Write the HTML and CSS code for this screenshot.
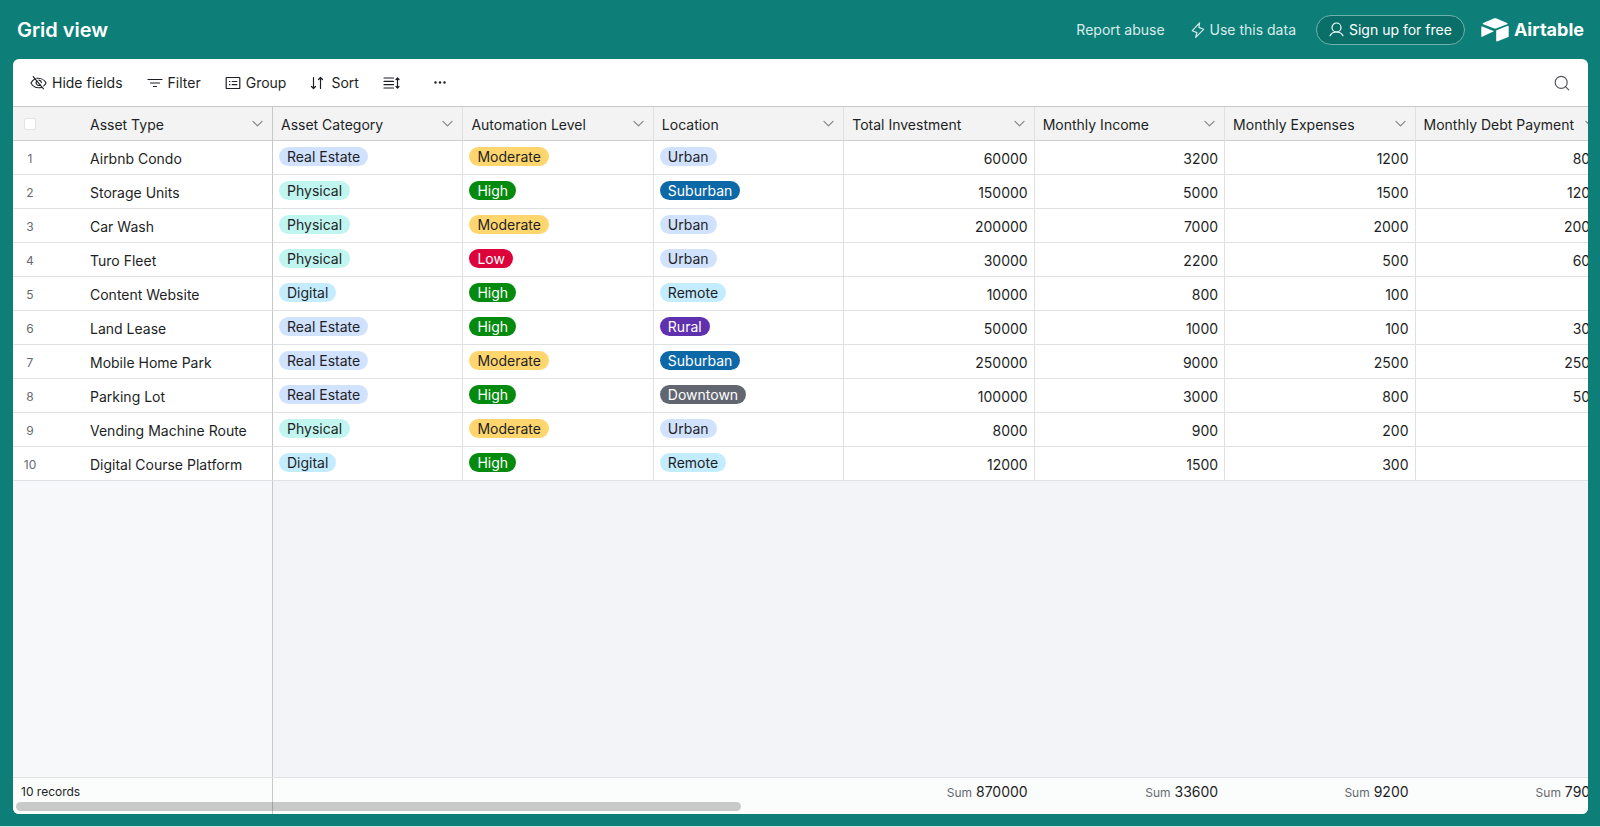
FILE: index.html
```
<!DOCTYPE html>
<html lang="en">
<head>
    <meta charset="UTF-8">
    <meta name="viewport" content="width=device-width, initial-scale=1.0">
    <title>Grid view - Airtable</title>
    <link rel="stylesheet" href="styles.css">
</head>
<body>
    <svg class="sprite" aria-hidden="true">
        <symbol id="chevron" viewBox="0 0 12 12">
            <path d="M1.800 4 6 8.200 10.200 4" fill="none" stroke="currentColor" stroke-width="1.100" stroke-linecap="round" stroke-linejoin="round"/>
        </symbol>
    </svg>

    <header class="topbar">
        <h1>Grid view</h1>
        <nav class="topbar-links">
            <a class="report" href="#">Report abuse</a>
            <a class="use-data" href="#">
                <svg width="14" height="16" viewBox="0 0 14 16" fill="none" stroke="currentColor" stroke-width="1.200" stroke-linejoin="round"><path d="M8.600 .8 1.300 8.700l4.600 1.900-1.200 4.700L12.600 7.300 7.900 5.400z"/></svg>
                Use this data
            </a>
            <a class="signup" href="#">
                <svg width="15" height="15" viewBox="0 0 15 15" fill="none" stroke="currentColor" stroke-width="1.200" stroke-linecap="round"><circle cx="7.500" cy="5.500" r="4.500"/><path d="M1 13.700c1.300-2.400 3.700-3.700 6.500-3.700s5.200 1.300 6.500 3.700"/></svg>
                Sign up for free
            </a>
            <a class="brand" href="#">
                <svg width="28" height="24" viewBox="0 0 28 24" fill="#fff"><path d="M12.700.6 2.200 4.900c-.6.200-.6 1 0 1.300l10.500 4.100c.9.400 2 .4 2.900 0l10.500-4.100c.6-.3.6-1.100 0-1.300L15.600.6c-.9-.4-2-.4-2.900 0z"/><path d="M15.200 12.900v9.900c0 .5.500.8.900.7l11.200-4.400c.3-.1.400-.4.400-.7V8.500c0-.5-.5-.8-.9-.7l-11.200 4.400c-.3.100-.4.400-.4.700z"/><path d="m12.500 13.400-3.400 1.700-7.900 3.700c-.4.200-.9 0-.9-.5V9.100c0-.2.100-.4.200-.5.300-.2.600-.2.900-.1l11 4.400c.4.100.4.400.1.500z"/></svg>
                <span>Airtable</span>
            </a>
        </nav>
    </header>

    <main class="panel">
        <div class="toolbar">
            <button type="button" class="tool hide-fields">
                <svg width="17" height="16" viewBox="0 0 17 16" fill="none" stroke="currentColor" stroke-width="1.100" stroke-linecap="round" stroke-linejoin="round"><path d="M3.200 1.600l10.300 12.200"/><path d="M5.200 3.700C2.200 5.200 1 8 1 8s2.200 4.800 7.500 4.800c1.200 0 2.200-.2 3.100-.6"/><path d="M6.800 3.300c.5-.1 1.100-.1 1.700-.1C13.800 3.200 16 8 16 8s-.7 1.600-2.300 2.900"/><path d="M6.700 5.800a2.900 2.900 0 0 0 3.700 4.300"/><path d="M9 5.100a2.900 2.900 0 0 1 2.400 2.700"/></svg>
                Hide fields
            </button>
            <button type="button" class="tool filter">
                <svg width="16" height="16" viewBox="0 0 16 16" stroke="currentColor" stroke-width="1.200" stroke-linecap="round"><path d="M1 4.500h14M3.500 8h9M6.500 11.500h3"/></svg>
                Filter
            </button>
            <button type="button" class="tool group">
                <svg width="16" height="16" viewBox="0 0 16 16" fill="none" stroke="currentColor" stroke-width="1.200" stroke-linecap="round"><rect x="1.200" y="2.500" width="13.600" height="11" rx=".6"/><path d="M7.200 6.500h4.600M7.200 9.700h4.600M4.500 6.500h.4M4.500 9.700h.4"/></svg>
                Group
            </button>
            <button type="button" class="tool sort">
                <svg width="14" height="16" viewBox="0 0 14 16" fill="none" stroke="currentColor" stroke-width="1.200" stroke-linecap="round" stroke-linejoin="round"><path d="M3.500 2.500v11M1.500 11.500l2 2 2-2M10.500 13.500v-11M8.500 4.500l2-2 2 2"/></svg>
                Sort
            </button>
            <button type="button" class="tool height" aria-label="Row height">
                <svg width="17" height="16" viewBox="0 0 17 16" fill="none" stroke="currentColor" stroke-width="1.200" stroke-linecap="round" stroke-linejoin="round"><path d="M1 3h9.500M1 6.300h9.500M1 9.700h9.500M1 13h9.500M14.500 3v10M13 4.500 14.500 3 16 4.500M13 11.500l1.500 1.500 1.500-1.500"/></svg>
            </button>
            <button type="button" class="tool more" aria-label="More options">
                <svg width="12" height="16" viewBox="0 0 12 16" fill="currentColor"><circle cx="1.500" cy="7.500" r="1.200"/><circle cx="6" cy="7.500" r="1.200"/><circle cx="10.500" cy="7.500" r="1.200"/></svg>
            </button>
            <button type="button" class="tool search" aria-label="Search">
                <svg width="16" height="16" viewBox="0 0 16 16" fill="none" stroke="currentColor" stroke-width="1.200" stroke-linecap="round"><circle cx="7.200" cy="7.400" r="6"/><path d="M11.500 11.700l3.200 3.200"/></svg>
            </button>
        </div>

        <div class="grid">
            <table>
                <colgroup>
                    <col class="col-num"><col class="col-name"><col><col><col><col><col><col><col>
                </colgroup>
                <thead>
                    <tr>
                        <th class="num"><input type="checkbox" aria-label="Select all records"></th>
                        <th class="name"><div>Asset Type <button type="button" aria-label="Asset Type menu"><svg><use href="#chevron"/></svg></button></div></th>
                        <th><div>Asset Category <button type="button" aria-label="Asset Category menu"><svg><use href="#chevron"/></svg></button></div></th>
                        <th><div>Automation Level <button type="button" aria-label="Automation Level menu"><svg><use href="#chevron"/></svg></button></div></th>
                        <th><div>Location <button type="button" aria-label="Location menu"><svg><use href="#chevron"/></svg></button></div></th>
                        <th><div>Total Investment <button type="button" aria-label="Total Investment menu"><svg><use href="#chevron"/></svg></button></div></th>
                        <th><div>Monthly Income <button type="button" aria-label="Monthly Income menu"><svg><use href="#chevron"/></svg></button></div></th>
                        <th><div>Monthly Expenses <button type="button" aria-label="Monthly Expenses menu"><svg><use href="#chevron"/></svg></button></div></th>
                        <th><div>Monthly Debt Payment <button type="button" aria-label="Monthly Debt Payment menu"><svg><use href="#chevron"/></svg></button></div></th>
                    </tr>
                </thead>
                <tbody>
                    <tr>
                        <td class="num">1</td>
                        <td class="name">Airbnb Condo</td>
                        <td><span class="pill blue">Real Estate</span></td>
                        <td><span class="pill yellow">Moderate</span></td>
                        <td><span class="pill blue">Urban</span></td>
                        <td class="amount">60000</td>
                        <td class="amount">3200</td>
                        <td class="amount">1200</td>
                        <td class="amount">800</td>
                    </tr>
                    <tr>
                        <td class="num">2</td>
                        <td class="name">Storage Units</td>
                        <td><span class="pill teal">Physical</span></td>
                        <td><span class="pill green">High</span></td>
                        <td><span class="pill navy">Suburban</span></td>
                        <td class="amount">150000</td>
                        <td class="amount">5000</td>
                        <td class="amount">1500</td>
                        <td class="amount">1200</td>
                    </tr>
                    <tr>
                        <td class="num">3</td>
                        <td class="name">Car Wash</td>
                        <td><span class="pill teal">Physical</span></td>
                        <td><span class="pill yellow">Moderate</span></td>
                        <td><span class="pill blue">Urban</span></td>
                        <td class="amount">200000</td>
                        <td class="amount">7000</td>
                        <td class="amount">2000</td>
                        <td class="amount">2000</td>
                    </tr>
                    <tr>
                        <td class="num">4</td>
                        <td class="name">Turo Fleet</td>
                        <td><span class="pill teal">Physical</span></td>
                        <td><span class="pill red">Low</span></td>
                        <td><span class="pill blue">Urban</span></td>
                        <td class="amount">30000</td>
                        <td class="amount">2200</td>
                        <td class="amount">500</td>
                        <td class="amount">600</td>
                    </tr>
                    <tr>
                        <td class="num">5</td>
                        <td class="name">Content Website</td>
                        <td><span class="pill cyan">Digital</span></td>
                        <td><span class="pill green">High</span></td>
                        <td><span class="pill cyan">Remote</span></td>
                        <td class="amount">10000</td>
                        <td class="amount">800</td>
                        <td class="amount">100</td>
                        <td class="amount"></td>
                    </tr>
                    <tr>
                        <td class="num">6</td>
                        <td class="name">Land Lease</td>
                        <td><span class="pill blue">Real Estate</span></td>
                        <td><span class="pill green">High</span></td>
                        <td><span class="pill purple">Rural</span></td>
                        <td class="amount">50000</td>
                        <td class="amount">1000</td>
                        <td class="amount">100</td>
                        <td class="amount">300</td>
                    </tr>
                    <tr>
                        <td class="num">7</td>
                        <td class="name">Mobile Home Park</td>
                        <td><span class="pill blue">Real Estate</span></td>
                        <td><span class="pill yellow">Moderate</span></td>
                        <td><span class="pill navy">Suburban</span></td>
                        <td class="amount">250000</td>
                        <td class="amount">9000</td>
                        <td class="amount">2500</td>
                        <td class="amount">2500</td>
                    </tr>
                    <tr>
                        <td class="num">8</td>
                        <td class="name">Parking Lot</td>
                        <td><span class="pill blue">Real Estate</span></td>
                        <td><span class="pill green">High</span></td>
                        <td><span class="pill gray">Downtown</span></td>
                        <td class="amount">100000</td>
                        <td class="amount">3000</td>
                        <td class="amount">800</td>
                        <td class="amount">500</td>
                    </tr>
                    <tr>
                        <td class="num">9</td>
                        <td class="name">Vending Machine Route</td>
                        <td><span class="pill teal">Physical</span></td>
                        <td><span class="pill yellow">Moderate</span></td>
                        <td><span class="pill blue">Urban</span></td>
                        <td class="amount">8000</td>
                        <td class="amount">900</td>
                        <td class="amount">200</td>
                        <td class="amount"></td>
                    </tr>
                    <tr>
                        <td class="num">10</td>
                        <td class="name">Digital Course Platform</td>
                        <td><span class="pill cyan">Digital</span></td>
                        <td><span class="pill green">High</span></td>
                        <td><span class="pill cyan">Remote</span></td>
                        <td class="amount">12000</td>
                        <td class="amount">1500</td>
                        <td class="amount">300</td>
                        <td class="amount"></td>
                    </tr>
                </tbody>
            </table>
            <div class="empty"><div class="empty-left"></div></div>
            <table class="summary">
                <colgroup>
                    <col class="col-num"><col class="col-name"><col><col><col><col><col><col><col>
                </colgroup>
                <tbody>
                    <tr>
                        <td class="records" colspan="2">10 records</td>
                        <td></td>
                        <td></td>
                        <td></td>
                        <td class="amount"><span>Sum</span> 870000</td>
                        <td class="amount"><span>Sum</span> 33600</td>
                        <td class="amount"><span>Sum</span> 9200</td>
                        <td class="amount"><span>Sum</span> 7900</td>
                    </tr>
                </tbody>
            </table>
            <div class="scrollbar"></div>
        </div>
    </main>
</body>
</html>
```
FILE: styles.css
```
* {
    box-sizing: border-box;
}
body {
    font-family: Inter, "Liberation Sans", sans-serif;
    font-size: 14px;
    margin: 0;
    height: 100vh;
    display: flex;
    flex-direction: column;
    padding: 0 12px 12px 13px;
    border-bottom: 1px solid #cfe5e3;
    background-color: #0d7f78;
    color: #1d1f25;
    overflow: hidden;
}
.sprite {
    display: none;
}
button {
    font: inherit;
    color: inherit;
    background: none;
    border: 0;
    padding: 0;
    cursor: pointer;
}
svg {
    flex: none;
}

/* top bar */
.topbar {
    height: 59px;
    flex: none;
    display: flex;
    align-items: center;
    justify-content: space-between;
    padding: 0 4px;
    color: white;
}
.topbar h1 {
    margin: 0;
    font-size: 20px;
    font-weight: 600;
}
.topbar-links {
    display: flex;
    align-items: center;
}
.topbar-links a {
    display: flex;
    align-items: center;
    color: #d9eceb;
    text-decoration: none;
}
.topbar-links .use-data {
    gap: 5px;
    margin: 0 20px 0 26px;
}
.topbar-links .signup {
    height: 30px;
    gap: 5px;
    padding: 0 12px;
    border: 1px solid #6fb1ac;
    border-radius: 15px;
    background-color: #0a6f69;
    color: white;
}
.topbar-links .brand {
    gap: 5px;
    margin-left: 16px;
    color: white;
    font-size: 18px;
    font-weight: 700;
}

/* white panel */
.panel {
    flex: 1;
    min-height: 0;
    display: flex;
    flex-direction: column;
    background-color: white;
    border-radius: 6px;
    overflow: hidden;
}
.toolbar {
    height: 47px;
    flex: none;
    display: flex;
    align-items: center;
    gap: 24px;
    padding: 0 18px 0 17px;
}
.tool {
    display: flex;
    align-items: center;
    gap: 5px;
}
.tool.sort {
    gap: 7px;
}
.tool.more {
    margin-left: 10px;
}
.tool.search {
    margin-left: auto;
    color: #55585f;
}

/* grid */
.grid {
    flex: 1;
    min-height: 0;
    display: flex;
    flex-direction: column;
    position: relative;
    border-top: 1px solid #c8c8c8;
    overflow: hidden;
}
table {
    flex: none;
    width: 1593px;
    table-layout: fixed;
    border-collapse: separate;
    border-spacing: 0;
}
.col-num {
    width: 69px;
}
.col-name {
    width: 191px;
}
th,
td {
    height: 34px;
    padding: 2px 6px 0;
    border-right: 1px solid #dde1e3;
    border-bottom: 1px solid #dfe2e4;
    text-align: left;
    font-weight: 400;
    white-space: nowrap;
    vertical-align: middle;
}
th {
    padding: 2px 8px 0;
    background-color: #f3f3f3;
    border-bottom-color: #cfcfcf;
}
th div {
    display: flex;
    align-items: center;
    justify-content: space-between;
}
th button {
    display: flex;
    margin-bottom: 2px;
    color: #858585;
}
th svg {
    width: 13px;
    height: 13px;
}
th.num,
td.num {
    border-right: 0;
    padding-left: 0;
    padding-right: 35px;
    text-align: center;
}
td.num {
    font-size: 12px;
    color: #666a70;
}
.name,
.records {
    border-right-color: #c6c8ca;
}
.name {
    padding-left: 8px;
}
th input {
    appearance: none;
    display: block;
    width: 12px;
    height: 12px;
    margin: 0 auto 2px;
    border: 1px solid #e3e3e3;
    border-radius: 2px;
    background-color: white;
}
td.amount {
    text-align: right;
}
.pill {
    display: block;
    width: fit-content;
    height: 19px;
    line-height: 19px;
    margin-bottom: 4px;
    padding: 0 8px;
    border-radius: 10px;
}
.blue {
    background-color: #d1e2ff;
}
.teal {
    background-color: #c1f5f0;
}
.cyan {
    background-color: #c4ecff;
}
.yellow {
    background-color: #ffd66e;
}
.green {
    background-color: #048a0e;
    color: white;
}
.red {
    background-color: #dc043b;
    color: white;
}
.navy {
    background-color: #0d68a8;
    color: white;
}
.purple {
    background-color: #6031ae;
    color: white;
}
.gray {
    background-color: #616670;
    color: white;
}

/* area below the last row */
.empty {
    flex: 1;
    background-color: #f2f4f8;
}
.empty-left {
    width: 260px;
    height: 100%;
    background-color: #f7f8f9;
    border-right: 1px solid #c6c8ca;
}

/* summary bar */
.summary {
    background-color: #fbfcfc;
    border-top: 1px solid #e0e2e4;
}
.summary td {
    height: 36px;
    padding-top: 0;
    padding-bottom: 10px;
    border-bottom: 0;
    border-right: 1px solid transparent;
}
.summary .records {
    padding-left: 8px;
    font-size: 12px;
    border-right-color: #c6c8ca;
}
.summary span {
    font-size: 12px;
    color: #666a70;
}
.scrollbar {
    position: absolute;
    left: 3px;
    bottom: 3px;
    width: 46%;
    height: 9px;
    border-radius: 5px;
    background-color: rgba(0, 0, 0, 0.2);
}
```
